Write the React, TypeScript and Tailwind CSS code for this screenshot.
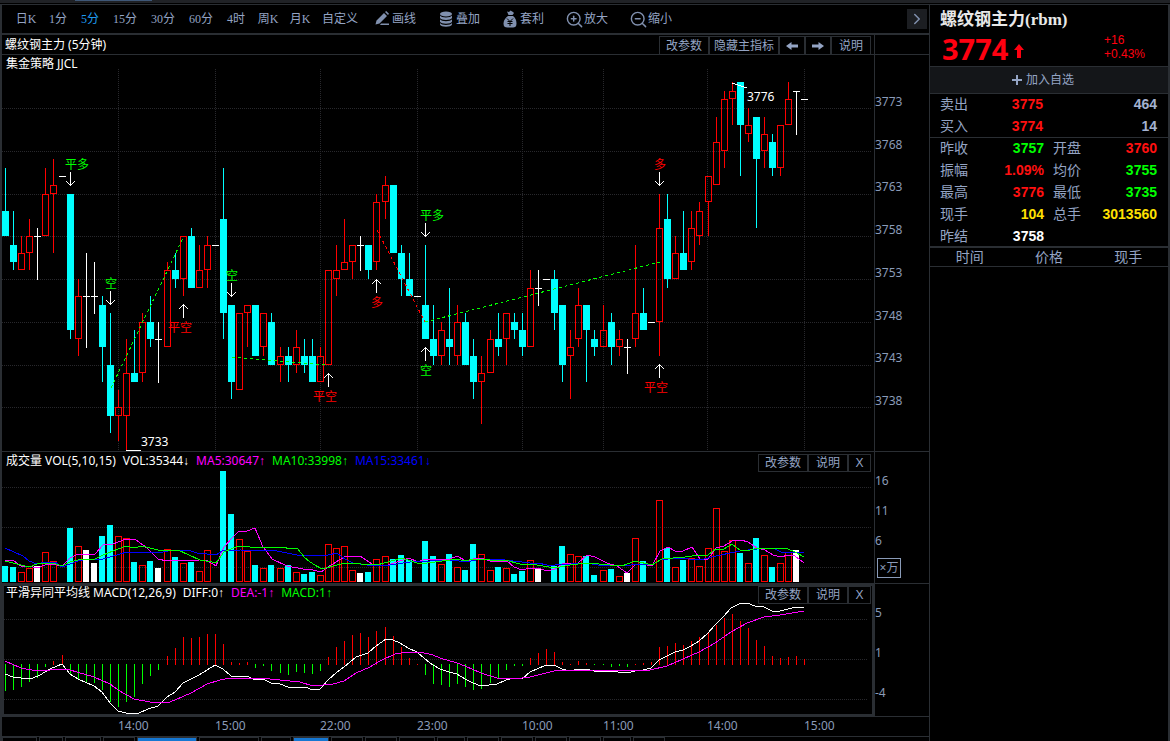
import type { ReactNode } from "react";
import { ChevronRight, ZoomIn, ZoomOut } from "lucide-react";

// [open, high, low, close], price minus 3700
const CANDLES: number[][] = [
  [61, 66, 58, 58], [57, 61, 54, 55], [54, 58, 54, 56], [56, 60, 54, 58], [58, 59, 53, 58],
  [58, 66, 58, 63], [63, 67, 56, 64], [65, 65, 65, 65], [63, 63, 46, 47], [46, 53, 44, 51],
  [51, 56, 45, 51], [51, 55, 49, 51], [50, 51, 41, 45], [43, 49, 35, 37], [37, 40, 34, 38],
  [37, 46, 33, 42], [42, 47, 41, 41], [42, 49, 41, 48], [48, 51, 45, 46], [46, 48, 41, 46],
  [45, 55, 45, 54], [54, 56, 52, 53], [53, 58, 51, 58], [58, 59, 52, 52], [52, 57, 52, 54],
  [54, 58, 52, 57], [57, 57, 57, 57], [60, 66, 46, 49], [50, 50, 39, 41], [40, 49, 40, 49],
  [49, 50, 45, 50], [50, 50, 44, 44], [45, 49, 44, 49], [48, 49, 43, 43], [43, 45, 41, 44],
  [44, 45, 41, 43], [43, 47, 42, 45], [44, 46, 42, 43], [44, 46, 41, 41], [41, 45, 41, 44],
  [43, 54, 43, 54], [53, 57, 51, 54], [54, 60, 54, 55], [55, 57, 53, 57], [57, 58, 54, 57],
  [57, 57, 53, 54], [55, 63, 54, 62], [62, 65, 60, 64], [64, 64, 56, 56], [56, 57, 51, 53],
  [53, 56, 51, 51], [51, 51, 51, 51], [50, 57, 46, 46], [46, 50, 43, 44], [44, 48, 43, 47],
  [46, 52, 43, 45], [44, 50, 43, 48], [48, 49, 43, 43], [44, 46, 39, 41], [41, 44, 36, 42],
  [42, 47, 42, 46], [46, 49, 44, 45], [46, 49, 43, 49], [48, 49, 46, 47], [47, 49, 44, 45],
  [45, 54, 45, 52], [52, 54, 50, 52], [53, 53, 53, 53], [53, 54, 47, 49], [50, 50, 41, 43],
  [44, 47, 39, 45], [46, 52, 45, 50], [50, 50, 41, 47], [46, 47, 44, 45], [45, 50, 45, 47],
  [48, 49, 43, 45], [45, 47, 44, 46], [45, 46, 42, 45], [46, 57, 45, 49], [49, 52, 47, 47],
  [48, 48, 48, 48], [48, 63, 44, 59], [60, 63, 52, 53], [53, 58, 53, 56], [56, 61, 54, 54],
  [55, 61, 54, 59], [58, 62, 57, 61], [62, 65, 58, 65], [64, 72, 64, 69], [68, 75, 66, 74],
  [74, 76, 71, 75], [76, 76, 65, 71], [70, 73, 69, 71], [72, 72, 59, 67], [68, 72, 66, 70],
  [69, 70, 65, 66], [66, 71, 65, 71], [71, 76, 71, 74], [75, 75, 70, 75], [74, 74, 74, 74],
];

const VOLUMES = [
  16, 15, 10, 14, 16, 30, 21, 0, 54, 36, 32, 19, 46, 57, 46, 44, 20, 17, 21, 14,
  33, 25, 19, 20, 11, 32, 0, 111, 68, 43, 31, 17, 14, 17, 14, 17, 10, 8, 10, 7,
  38, 34, 36, 12, 9, 10, 23, 26, 23, 27, 22, 0, 41, 26, 18, 28, 15, 12, 38, 28,
  12, 15, 14, 8, 11, 22, 14, 0, 16, 36, 28, 26, 26, 7, 12, 13, 6, 9, 44, 21,
  0, 82, 34, 15, 22, 24, 16, 34, 74, 31, 42, 29, 19, 44, 27, 15, 19, 30, 32, 0,
];

const MACD = [
  -27, -26, -23, -18, -14, -3, 4, 10, -10, -15, -18, -19, -26, -38, -43, -38, -33, -20, -12, -6,
  9, 17, 28, 27, 28, 31, 31, 21, 3, 2, 3, -4, -2, -7, -9, -11, -8, -9, -10, -7,
  8, 18, 24, 30, 32, 28, 34, 38, 29, 18, 7, 1, -11, -20, -21, -23, -20, -23, -26, -25,
  -19, -14, -6, -2, -2, 7, 12, 16, 13, 3, 1, 4, 2, -1, -1, -3, -2, -3, 1, 2,
  3, 18, 19, 22, 20, 24, 28, 33, 40, 47, 51, 44, 37, 25, 19, 9, 7, 8, 9, 6,
];

const MA5 =
  "5,560 13,560 21,566 29,566 37,568 45,565 53,564 62,566 70,558 78,554 95,554 103,545 113,544 126,539 135,539 147,548 158,559 167,561 200,560 208,561 216,566 224,547 232,538 239,531 247,531 255,528 263,547 272,559 287,566 303,569 313,570 321,572 328,567 344,557 360,556 372,564 385,566 409,558 418,562 425,559 440,560 450,559 457,556 466,561 473,559 481,558 490,561 507,561 514,567 522,570 530,568 538,568 547,571 555,569 562,564 578,563 587,555 595,557 607,563 617,566 627,573 635,565 643,564 652,566 660,551 668,547 675,551 683,551 692,547 700,559 708,559 716,548 724,546 732,541 741,540 748,542 757,548 765,550 773,555 781,557 788,555 795,556 804,563";
const MA10 =
  "5,561 13,563 21,565 29,567 37,564 53,563 62,566 70,562 78,560 95,559 103,555 118,549 126,546 134,548 142,546 158,550 178,550 200,560 212,562 216,563 224,552 233,548 239,546 260,548 283,547 290,549 297,548 305,558 313,564 322,569 337,565 345,563 377,565 402,558 417,563 427,563 450,560 457,559 465,561 473,559 490,560 505,560 520,564 537,565 555,568 570,565 587,563 622,566 635,561 652,565 662,559 685,557 692,556 708,555 716,549 724,549 732,544 740,550 747,551 757,548 788,549 795,552 804,557";
const MA15 =
  "5,548 23,556 29,561 37,564 45,562 55,562 62,567 78,561 88,559 103,559 127,552 163,552 172,550 188,550 197,553 216,555 222,551 240,550 277,551 297,555 328,555 337,553 345,559 353,563 367,565 390,565 410,562 450,560 467,562 480,559 505,560 530,563 538,563 547,565 555,565 587,563 603,566 617,565 627,566 635,564 652,565 660,560 677,558 700,560 716,556 740,551 757,549 773,548 781,552 804,552";
const DIFF =
  "5,674 13,677 21,678 33,678 40,675 50,669 62,664 70,674 78,679 94,686 102,692 110,703 118,711 126,713 134,714 139,713 148,709 158,706 167,697 175,692 183,683 199,675 207,670 215,665 223,669 231,676 239,677 247,676 255,680 263,679 271,683 280,684 288,687 305,687 313,690 320,689 328,680 336,673 344,667 356,657 368,653 376,646 386,639 393,640 400,643 408,648 417,652 425,659 433,665 440,669 449,672 457,674 465,679 473,683 481,686 497,684 506,680 514,678 522,679 530,672 546,665 554,665 562,669 570,671 578,669 586,669 594,671 610,671 618,672 627,673 635,671 643,670 651,668 659,660 667,656 675,652 683,650 691,646 699,641 707,634 715,625 723,617 731,608 739,604 747,603 755,606 764,607 772,611 780,611 788,609 796,607 804,608";
const DEA =
  "5,661 21,668 37,671 50,670 62,669 70,670 94,677 110,684 118,690 134,699 150,702 167,703 175,700 191,693 207,684 220,680 230,678 260,678 280,680 300,682 313,686 333,684 344,681 356,673 370,667 380,661 395,654 408,652 420,652 433,655 440,658 457,663 465,666 481,673 497,678 522,678 530,677 554,671 594,670 650,670 667,666 683,659 699,652 715,643 731,632 747,623 764,617 780,615 804,611";

const TIMES: [string, number][] = [
  ["14:00", 97], ["15:00", 105], ["22:00", 97], ["23:00", 105],
  ["10:00", 81], ["11:00", 104], ["14:00", 97], ["15:00", 60],
];
const SESSION_X = [118, 215, 320, 417, 522, 603, 707, 804];

// text, x, baseline, color
const SIGNALS: [string, number, number, string][] = [
  ["平多", 65, 169, "#00ff00"], ["空", 105, 288, "#00ff00"], ["平空", 168, 332, "#ff0000"],
  ["空", 226, 280, "#00ff00"], ["平空", 313, 401, "#ff0000"], ["多", 371, 307, "#ff0000"],
  ["平多", 420, 220, "#00ff00"], ["空", 420, 375, "#00ff00"], ["多", 654, 169, "#ff0000"],
  ["平空", 644, 392, "#ff0000"],
];
// x, tip y, direction
const ARROWS: [number, number, 1 | -1][] = [
  [70, 186, -1], [110, 305, -1], [183, 304, 1], [231, 297, -1], [328, 373, 1],
  [376, 279, 1], [425, 237, -1], [425, 347, 1], [659, 186, -1], [659, 364, 1],
];

const barX = (i: number) => Math.floor(5.51 + 8.075 * i);
const priceY = (p: number) => Math.round(108 + (73 - p) * 8.55);
const barColor = ([open, , , close]: number[]) =>
  close > open ? "#ff0000" : close < open ? "#00ffff" : "#ffffff";

const PANEL_TEXT =
  "font-['Noto_Sans','Liberation_Sans','Noto_Sans_CJK_SC',sans-serif] text-[12px] leading-4";

function Candle({ bar, i }: { bar: number[]; i: number }) {
  const [open, high, low, close] = bar;
  const x = barX(i);
  const color = barColor(bar);
  const top = priceY(Math.max(open, close));
  const bottom = priceY(Math.min(open, close));
  if (open === close) {
    return (
      <g fill={color}>
        <rect x={x - 3} y={top} width={7} height={1} />
        <rect x={x} y={priceY(high)} width={1} height={priceY(low) - priceY(high) + 1} />
      </g>
    );
  }
  if (close < open) {
    return (
      <g fill={color}>
        <rect x={x - 3} y={top} width={7} height={bottom - top} />
        <rect x={x} y={priceY(high)} width={1} height={priceY(low) - priceY(high)} />
      </g>
    );
  }
  return (
    <g fill={color}>
      <rect x={x} y={priceY(high)} width={1} height={top - priceY(high)} />
      <rect x={x} y={bottom} width={1} height={priceY(low) - bottom} />
      <rect x={x - 2.5} y={top + 0.5} width={6} height={bottom - top - 1} fill="none" stroke={color} />
    </g>
  );
}

function GridLines({ ys }: { ys: number[] }) {
  return (
    <g stroke="#28282c" strokeDasharray="1 1">
      {ys.map((y) => (
        <line key={y} x1="0" x2="100%" y1={y + 0.5} y2={y + 0.5} />
      ))}
    </g>
  );
}

function PriceChart() {
  return (
    <svg className="block h-full w-full" shapeRendering="crispEdges">
      <g transform="translate(-2 -55)">
        <GridLines ys={[108, 151, 194, 236, 279, 322, 365, 407]} />
        <g stroke="#28282c" strokeDasharray="1 1">
          {SESSION_X.map((x) => (
            <line key={x} x1={x + 0.5} x2={x + 0.5} y1={69} y2={450} />
          ))}
        </g>
        {CANDLES.map((bar, i) => (
          <Candle key={i} bar={bar} i={i} />
        ))}
        <g fill="none" strokeDasharray="3 3">
          <path d="M111 388L184 236M232 357L328 365M425 322L660 262" stroke="#00ff00" />
          <path d="M377 230L425 322" stroke="#ff0000" />
        </g>
        <g fill="none" stroke="#ffffff">
          {ARROWS.map(([x, y, dir], i) => (
            <path
              key={i}
              d={`M${x + 0.5} ${y}v${dir * 14}M${x - 4} ${y + dir * 5}L${x + 0.5} ${y + dir * 0.5}L${x + 5} ${y + dir * 5}`}
            />
          ))}
          <path d="M126 450.5H141M732 83L747 88" />
        </g>
        <g className="font-['Noto_Sans_CJK_SC',sans-serif] text-[12px]">
          {SIGNALS.map(([text, x, y, color], i) => (
            <text key={i} x={x} y={y} fill={color}>
              {text}
            </text>
          ))}
        </g>
        <g className={PANEL_TEXT} fill="#ffffff">
          <text x={141} y={446}>3733</text>
          <text x={747} y={101}>3776</text>
        </g>
      </g>
    </svg>
  );
}

function VolumeChart() {
  return (
    <svg className="block h-full w-full" shapeRendering="crispEdges">
      <g transform="translate(-2 -452)">
        <GridLines ys={[487, 527, 567]} />
        {VOLUMES.map((h, i) => {
          if (!h) return null;
          const color = barColor(CANDLES[i]);
          return color === "#ff0000" ? (
            <rect key={i} x={barX(i) - 2.5} y={582.5 - h} width={6} height={h - 1} fill="none" stroke={color} />
          ) : (
            <rect key={i} x={barX(i) - 3} y={582 - h} width={6} height={h} fill={color} />
          );
        })}
        <g fill="none">
          <polyline points={MA5} stroke="#ff00ff" />
          <polyline points={MA15} stroke="#0000ff" />
          <polyline points={MA10} stroke="#00ff00" />
        </g>
      </g>
    </svg>
  );
}

function MacdChart() {
  return (
    <svg className="block h-full w-full" shapeRendering="crispEdges">
      <g transform="translate(-4 -586)">
        <GridLines ys={[619, 659, 699]} />
        {MACD.map((h, i) => (
          <rect
            key={i}
            x={barX(i)}
            y={h > 0 ? 665 - h : 664}
            width={1}
            height={Math.abs(h)}
            fill={h > 0 ? "#ff0000" : "#00ff00"}
          />
        ))}
        <g fill="none">
          <polyline points={DIFF} stroke="#ffffff" />
          <polyline points={DEA} stroke="#ff00ff" />
        </g>
      </g>
    </svg>
  );
}

function PanelButton({ children, className, label }: { children: ReactNode; className: string; label?: string }) {
  return (
    <button
      aria-label={label}
      className={`flex h-[18px] items-center justify-center border border-[#2a2e33] bg-black text-[12px] leading-4 whitespace-nowrap text-[#94a4c4] ${className}`}
    >
      {children}
    </button>
  );
}

function PanelButtons({ className }: { className: string }) {
  return (
    <div className={`absolute flex font-['Liberation_Sans','Noto_Sans_CJK_SC',sans-serif] ${className}`}>
      <PanelButton className="w-[50px]">改参数</PanelButton>
      <PanelButton className="w-10">说明</PanelButton>
      <PanelButton className="w-[23px]" label="关闭">X</PanelButton>
    </div>
  );
}

function Arrow({ className }: { className: string }) {
  return (
    <svg viewBox="0 0 12 8" className={`h-2 w-3 ${className}`} fill="#94a4c4">
      <path d="M12 2.5H5.5V0L0 4l5.5 4V5.5H12z" />
    </svg>
  );
}

function MoneyBag() {
  return (
    <svg viewBox="0 0 14 18" className="h-[18px] w-3.5">
      <path fill="#8090ae" d="M4 1.5L6 2l1.500-1.500L10 2l1 1-1.500 2h-4zM5 6h5c2 1.500 3.500 4 3.500 7.500 0 3-1.500 4-3.500 4H4.500c-2.500 0-4-1-4-4C.5 10 3 7.500 5 6z" />
      <path stroke="#000" fill="none" d="M4 8.500l3 3 3-3M7 11.500V16M4.500 11.500h5M4.500 13.500h5" />
    </svg>
  );
}

const PERIODS = [
  ["日K", "w-8"], ["1分", "w-8"], ["5分", "w-8"], ["15分", "w-[38px]"], ["30分", "w-[38px]"],
  ["60分", "w-[38px]"], ["4时", "w-8"], ["周K", "w-8"], ["月K", "w-8"], ["自定义", "w-12"],
];

const TOOLS: [string, ReactNode][] = [
  [
    "画线",
    <svg key="draw" viewBox="0 0 16 16" className="size-4" fill="#8090ae">
      <path d="M1.500 13.500l1-4L10 2l3 3-7.500 7.500zM11 1l1.200-1 2.800 2.800L14 4zM7 12.500h8V14H6z" />
    </svg>,
  ],
  [
    "叠加",
    <svg key="stack" viewBox="0 0 14 16" className="h-4 w-3.5" fill="#8090ae">
      <ellipse cx="7" cy="3" rx="6" ry="2.500" />
      <path d="M1 4.500c1 2.500 11 2.500 12 0v2.500c-1 2.500-11 2.500-12 0zM1 8.300c1 2.500 11 2.500 12 0v2.500c-1 2.500-11 2.500-12 0zM1 12c1 2.500 11 2.500 12 0v1.500c-1 3-11 3-12 0z" />
    </svg>,
  ],
  ["套利", <MoneyBag key="bag" />],
  ["放大", <ZoomIn key="in" className="size-[19px] shrink-0" color="#8090ae" strokeWidth={1.8} />],
  ["缩小", <ZoomOut key="out" className="size-[19px] shrink-0" color="#8090ae" strokeWidth={1.8} />],
];

function Toolbar() {
  return (
    <div className="flex h-[31px] items-center border-t border-b-2 border-[#2a2e33] pl-2 font-['Liberation_Serif','Noto_Sans_CJK_SC',serif] text-[12px] text-[#94a4c4]">
      {PERIODS.map(([label, width]) => (
        <button
          key={label}
          className={`text-center whitespace-nowrap ${width} ${label === "5分" ? "text-[#1e9bf0]" : ""}`}
        >
          {label}
        </button>
      ))}
      <div className="flex flex-1 pl-2.5">
        {TOOLS.map(([label, icon]) => (
          <button key={label} className="flex w-16 items-center gap-0.5 whitespace-nowrap">
            <span className="flex w-4 justify-center">{icon}</span>
            {label}
          </button>
        ))}
      </div>
      <button aria-label="更多" className="mr-0.5 flex size-5 items-center justify-center bg-[#1c1e22] text-[#8090ae]">
        <ChevronRight className="size-[18px]" strokeWidth={2} />
      </button>
    </div>
  );
}

const QUOTES = [
  ["昨收", "3757", "text-[#00ff00]", "开盘", "3760", "text-[#ff1010]"],
  ["振幅", "1.09%", "text-[#ff1010]", "均价", "3755", "text-[#00ff00]"],
  ["最高", "3776", "text-[#ff1010]", "最低", "3735", "text-[#00ff00]"],
  ["现手", "104", "text-[#ffe000]", "总手", "3013560", "text-[#ffe000]"],
  ["昨结", "3758", "text-white", "", "", ""],
];

function Quote({ label, value, color }: { label: string; value: string; color: string }) {
  return (
    <div className="flex justify-between">
      <dt className="text-[#94a4c4]">{label}</dt>
      <dd className={`font-bold ${color}`}>{value}</dd>
    </div>
  );
}

function QuotePanel() {
  return (
    <aside className="flex w-60 shrink-0 flex-col border-t border-r-2 border-[#2a2e33] font-['Liberation_Sans','Noto_Sans_CJK_SC',sans-serif]">
      <div className="h-[61px] pt-1 pl-2.5">
        <h1 className="font-['Liberation_Serif','Noto_Sans_CJK_SC',serif] text-[17px] leading-[22px] font-bold text-[#e8e8e8]">
          螺纹钢主力(rbm)
        </h1>
        <div className="flex text-[#ff0010]">
          <strong className="w-[74px] pl-0.5 font-['Noto_Sans',sans-serif] text-[29px] leading-9">3774</strong>
          <svg viewBox="0 0 10 14" className="mt-[13px] h-3.5 w-2.5" fill="#ff0010">
            <path d="M5 0L0 6h3v8h4V6h3z" />
          </svg>
          <div className="pt-0.5 pl-20 text-[12px] leading-[14px]">
            <p>+16</p>
            <p>+0.43%</p>
          </div>
        </div>
      </div>
      <button className="flex h-7 items-center justify-center gap-1 border-y border-[#2a2e33] bg-[#141619] pr-3 text-[12px] text-[#94a4c4]">
        <svg viewBox="0 0 10 10" className="size-2.5" fill="#94a4c4">
          <path d="M4 0h2v4h4v2H6v4H4V6H0V4h4z" />
        </svg>
        加入自选
      </button>
      <dl className="border-b border-[#2a2e33] pr-[11px] pl-2.5 text-[14px] leading-5">
        {[["卖出", "3775", "464"], ["买入", "3774", "14"]].map(([label, price, lots]) => (
          <div key={label} className="flex h-[22px] justify-between last:h-[21px]">
            <dt className="w-[52px] text-[#94a4c4]">{label}</dt>
            <dd className="w-[51px] text-right font-bold text-[#ff1010]">{price}</dd>
            <dd className="flex-1 text-right font-bold text-[#a4b2d0]">{lots}</dd>
          </div>
        ))}
      </dl>
      <dl className="h-[110px] border-b-2 border-[#2a2e33] pr-[11px] pl-2.5 text-[14px] leading-5">
        {QUOTES.map(([l1, v1, c1, l2, v2, c2]) => (
          <div key={l1} className="grid h-[22px] grid-cols-2 gap-[9px]">
            <Quote label={l1} value={v1} color={c1} />
            {l2 && <Quote label={l2} value={v2} color={c2} />}
          </div>
        ))}
      </dl>
      <table className="w-full table-fixed border-b border-[#2a2e33] text-[14px] leading-[18px] text-[#94a4c4]">
        <thead>
          <tr>
            <th className="p-0 font-normal">时间</th>
            <th className="p-0 font-normal">价格</th>
            <th className="p-0 font-normal">现手</th>
          </tr>
        </thead>
      </table>
    </aside>
  );
}

const TABS = [
  "w-[35px]", "w-6", "w-9", "w-8", "w-[60px] bg-[#1677d2]", "w-[60px]", "w-[30px]", "w-9 bg-[#1677d2]",
  "w-8", "w-8", "w-9", "w-7", "w-8", "w-8", "w-8", "w-8", "w-7", "w-8",
];

export default function App() {
  return (
    <div className="flex h-screen flex-col overflow-hidden bg-black">
      <div className="h-1 shrink-0 border-b border-black bg-[#202226]">
        <div className="ml-[75px] h-px w-[77px] bg-[#3f5878]" />
      </div>
      <div className="flex min-h-0 flex-1">
        <main className="flex min-w-0 flex-1 flex-col border-r border-l-2 border-[#2a2e33]">
          <Toolbar />
          <div className="flex h-5 border-b border-[#2a2e33]">
            <div className="flex min-w-0 flex-1 items-end justify-between border-r border-[#2a2e33] pr-[3px] pl-[3px]">
              <h2 className={`text-white ${PANEL_TEXT} pb-px`}>螺纹钢主力 (5分钟)</h2>
              <div className="flex font-['Liberation_Sans','Noto_Sans_CJK_SC',sans-serif]">
                <PanelButton className="w-[50px] border-b-0">改参数</PanelButton>
                <PanelButton className="w-[70px] border-b-0">隐藏主指标</PanelButton>
                <PanelButton className="w-[26px] border-b-0" label="上一个">
                  <Arrow className="" />
                </PanelButton>
                <PanelButton className="w-[26px] border-b-0" label="下一个">
                  <Arrow className="rotate-180" />
                </PanelButton>
                <PanelButton className="w-10 border-b-0">说明</PanelButton>
              </div>
            </div>
            <div className="w-[54px]" />
          </div>

          <section className="flex h-[397px] border-b border-[#2a2e33]">
            <div className="relative min-w-0 flex-1 border-r border-[#2a2e33]">
              <PriceChart />
              <h3 className={`absolute top-px left-1 text-white ${PANEL_TEXT}`}>集金策略 JJCL</h3>
            </div>
            <div className={`flex w-[54px] flex-col pt-[39px] text-[#8a9bb8] ${PANEL_TEXT}`}>
              <div className="flex h-[315px] flex-col justify-between">
                {[3773, 3768, 3763, 3758, 3753, 3748, 3743, 3738].map((p) => (
                  <span key={p}>{p}</span>
                ))}
              </div>
            </div>
          </section>

          <section className="flex h-[131px]">
            <div className="relative min-w-0 flex-1 border-r border-[#2a2e33]">
              <VolumeChart />
              <h3 className={`absolute top-px left-1 flex gap-[7px] whitespace-nowrap text-white ${PANEL_TEXT}`}>
                <span>成交量 VOL(5,10,15)</span>
                <span>VOL:35344↓</span>
                <span className="text-[#ff00ff]">MA5:30647↑</span>
                <span className="text-[#00ff00]">MA10:33998↑</span>
                <span className="text-[#0000ff]">MA15:33461↓</span>
              </h3>
              <PanelButtons className="top-0.5 right-[3px]" />
            </div>
            <div className={`w-[54px] pt-[14px] text-[#8a9bb8] ${PANEL_TEXT}`}>
              {[16, 11, 6].map((v) => (
                <p key={v} className="h-[30px] leading-[30px]">{v}</p>
              ))}
              <p className="mt-0.5 ml-0.5 h-5 w-6 border border-[#8a9bb8] text-center leading-[18px]">×万</p>
            </div>
          </section>

          <section className="flex h-[134px]">
            <div className="relative min-w-0 flex-1 border-y-3 border-r-3 border-l-2 border-[#2a2e33]">
              <MacdChart />
              <h3 className={`absolute -top-px left-0.5 flex gap-[7px] whitespace-nowrap text-white ${PANEL_TEXT}`}>
                <span>平滑异同平均线 MACD(12,26,9)</span>
                <span>DIFF:0↑</span>
                <span className="text-[#ff00ff]">DEA:-1↑</span>
                <span className="text-[#00ff00]">MACD:1↑</span>
              </h3>
              <PanelButtons className="top-0 right-px" />
            </div>
            <div className={`w-[54px] border-y border-[#2a2e33] pt-[9px] text-[#8a9bb8] ${PANEL_TEXT}`}>
              {[5, 1, -4].map((v) => (
                <p key={v} className="h-10 leading-10">{v}</p>
              ))}
            </div>
          </section>

          <div className={`flex h-5 border-b border-[#2a2e33] pl-[116px] text-[#8a9bb8] ${PANEL_TEXT}`}>
            {TIMES.map(([time, width], i) => (
              <span key={i} className="pt-px" style={{ width }}>{time}</span>
            ))}
          </div>
          <div className="flex min-h-0 flex-1 gap-0.5 overflow-hidden">
            {TABS.map((style, i) => (
              <div key={i} className={`h-5 shrink-0 border border-[#2a2e33] ${style}`} />
            ))}
          </div>
        </main>
        <QuotePanel />
      </div>
    </div>
  );
}
